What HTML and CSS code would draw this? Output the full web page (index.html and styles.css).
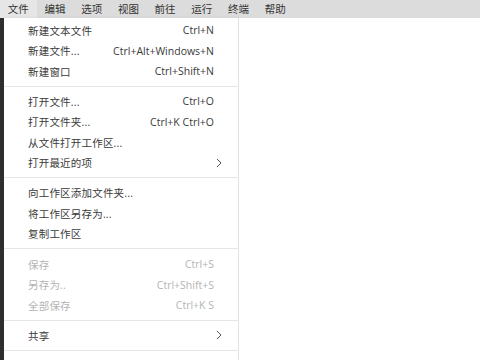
FILE: index.html
```html
<!DOCTYPE html>
<html lang="zh">
<head>
<meta charset="utf-8">
<link rel="stylesheet" href="styles.css">
</head>
<body>
<div class="menubar">
  <span class="top active">文件</span>
  <span class="top">编辑</span>
  <span class="top">选项</span>
  <span class="top">视图</span>
  <span class="top">前往</span>
  <span class="top">运行</span>
  <span class="top">终端</span>
  <span class="top">帮助</span>
</div>
<div class="main">
  <div class="sidebar"></div>
  <div class="menu">
    <div class="item"><span class="label">新建文本文件</span><span class="key">Ctrl+N</span></div>
    <div class="item"><span class="label">新建文件...</span><span class="key">Ctrl+Alt+Windows+N</span></div>
    <div class="item"><span class="label">新建窗口</span><span class="key">Ctrl+Shift+N</span></div>
    <div class="sep"></div>
    <div class="item"><span class="label">打开文件...</span><span class="key">Ctrl+O</span></div>
    <div class="item"><span class="label">打开文件夹...</span><span class="key">Ctrl+K Ctrl+O</span></div>
    <div class="item"><span class="label">从文件打开工作区...</span></div>
    <div class="item"><span class="label">打开最近的项</span><svg class="chev" width="6" height="10" viewBox="0 0 6 10"><polyline points="1,1 5,5 1,9" fill="none" stroke="#555" stroke-width="1"/></svg></div>
    <div class="sep"></div>
    <div class="item"><span class="label">向工作区添加文件夹...</span></div>
    <div class="item"><span class="label">将工作区另存为...</span></div>
    <div class="item"><span class="label">复制工作区</span></div>
    <div class="sep"></div>
    <div class="item disabled"><span class="label">保存</span><span class="key">Ctrl+S</span></div>
    <div class="item disabled"><span class="label">另存为..</span><span class="key">Ctrl+Shift+S</span></div>
    <div class="item disabled"><span class="label">全部保存</span><span class="key">Ctrl+K S</span></div>
    <div class="sep"></div>
    <div class="item"><span class="label">共享</span><svg class="chev" width="6" height="10" viewBox="0 0 6 10"><polyline points="1,1 5,5 1,9" fill="none" stroke="#555" stroke-width="1"/></svg></div>
    <div class="sep"></div>
    <div class="item"><span class="label">自动保存</span></div>
  </div>
  <div class="editor"></div>
</div>
</body>
</html>
```
FILE: styles.css
```css
html, body {
  margin: 0;
  padding: 0;
  height: 100%;
  overflow: hidden;
}
body {
  font-family: "Open Sans", "Noto Sans CJK SC", sans-serif;
  font-size: 10.5px;
  color: #3a3a3a;
  background: #ffffff;
}
.menubar {
  display: flex;
  height: 18px;
  background: #dcdcdc;
  align-items: center;
}
.top {
  padding: 0 7.85px;
  line-height: 18px;
  color: #333;
}
.top.active {
  background: #e6e6e6;
}
.main {
  display: flex;
  height: 342px;
}
.sidebar {
  width: 4px;
  background: #2e2e2e;
}
.menu {
  width: 234px;
  background: #ffffff;
  border-right: 1px solid #e2e2e2;
  box-shadow: 1px 0 3px rgba(0,0,0,0.08);
  padding-top: 2px;
  overflow: hidden;
}
.item {
  display: flex;
  align-items: center;
  height: 20.5px;
  padding: 0 24px 0 24px;
}
.label {
  flex: 1;
  letter-spacing: 0.2px;
}
.key {
  white-space: nowrap;
}
.chev {
  margin-right: -8px;
}
.disabled {
  color: #b4b4b4;
}
.sep {
  height: 1px;
  margin: 4.3px 0;
  background: #e6e6e6;
}
.editor {
  flex: 1;
  background: #ffffff;
}
```
